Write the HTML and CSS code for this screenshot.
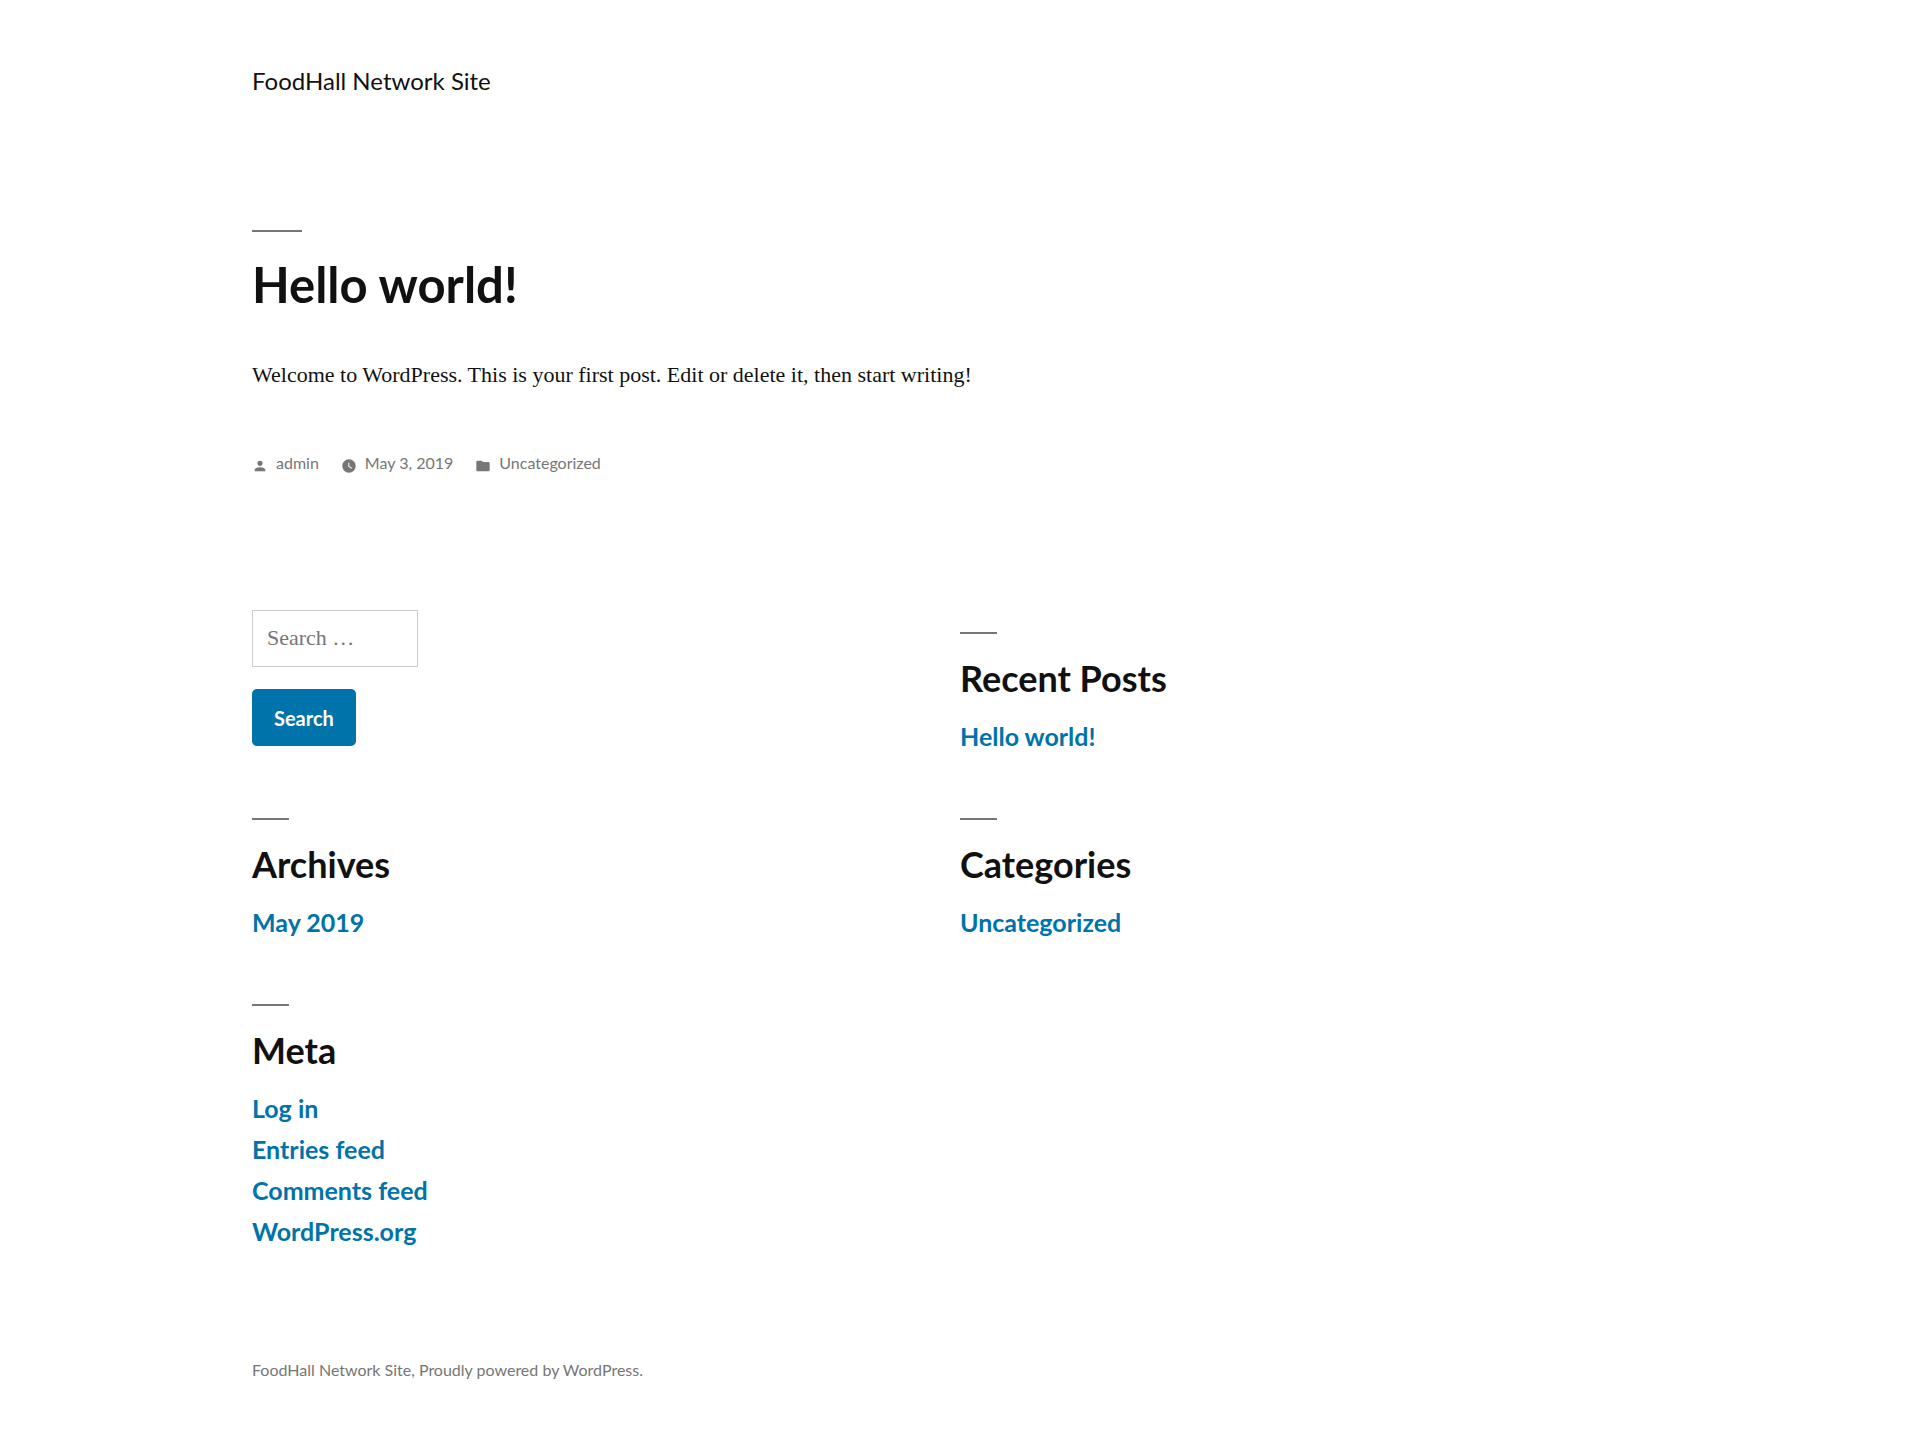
FILE: index.html
```html
<!DOCTYPE html>
<html lang="en">
<head>
    <meta charset="UTF-8">
    <meta name="viewport" content="width=device-width, initial-scale=1">
    <title>FoodHall Network Site</title>
    <link rel="stylesheet" href="styles.css">
</head>
<body>
    <header class="site-header">
        <p class="site-title"><a href="#">FoodHall Network Site</a></p>
    </header>

    <main class="site-main">
        <article class="entry">
            <h1 class="entry-title"><a href="#">Hello world!</a></h1>
            <p class="entry-content">Welcome to WordPress. This is your first post. Edit or delete it, then start writing!</p>
            <div class="entry-meta">
                <a class="meta-item" href="#">
                    <svg class="icon" viewBox="0 0 24 24" aria-hidden="true"><path d="M12 12c2.2 0 4-1.8 4-4s-1.8-4-4-4-4 1.8-4 4 1.8 4 4 4zm0 2c-2.7 0-8 1.3-8 4v2h16v-2c0-2.7-5.3-4-8-4z"/></svg>
                    <span>admin</span>
                </a>
                <a class="meta-item" href="#">
                    <svg class="icon" viewBox="0 0 24 24" aria-hidden="true"><path d="M12 2C6.5 2 2 6.5 2 12s4.5 10 10 10 10-4.5 10-10S17.5 2 12 2zm4.2 14.2L11 13V7h1.5v5.2l4.5 2.7-.8 1.3z"/></svg>
                    <time datetime="2019-05-03">May 3, 2019</time>
                </a>
                <a class="meta-item" href="#">
                    <svg class="icon" viewBox="0 0 24 24" aria-hidden="true"><path d="M10 4H4c-1.1 0-2 .9-2 2v12c0 1.1.9 2 2 2h16c1.1 0 2-.9 2-2V8c0-1.1-.9-2-2-2h-8l-2-2z"/></svg>
                    <span>Uncategorized</span>
                </a>
            </div>
        </article>
    </main>

    <footer class="site-footer">
        <div class="widget-area">
            <section class="widget">
                <form class="search-form" role="search" onsubmit="return false">
                    <input type="search" class="search-field" placeholder="Search …" aria-label="Search for:">
                    <button type="submit" class="search-submit">Search</button>
                </form>
            </section>
            <section class="widget">
                <h2 class="widget-title">Recent Posts</h2>
                <ul class="widget-list">
                    <li><a href="#">Hello world!</a></li>
                </ul>
            </section>
            <section class="widget">
                <h2 class="widget-title">Archives</h2>
                <ul class="widget-list">
                    <li><a href="#">May 2019</a></li>
                </ul>
            </section>
            <section class="widget">
                <h2 class="widget-title">Categories</h2>
                <ul class="widget-list">
                    <li><a href="#">Uncategorized</a></li>
                </ul>
            </section>
            <section class="widget">
                <h2 class="widget-title">Meta</h2>
                <ul class="widget-list">
                    <li><a href="#">Log in</a></li>
                    <li><a href="#">Entries feed</a></li>
                    <li><a href="#">Comments feed</a></li>
                    <li><a href="#">WordPress.org</a></li>
                </ul>
            </section>
        </div>

        <div class="site-info">
            <a href="#">FoodHall Network Site</a>, <a href="#">Proudly powered by WordPress.</a>
        </div>
    </footer>
</body>
</html>
```
FILE: styles.css
```css
:root {
    --text: #111;
    --muted: #767676;
    --link: #0073aa;
    --border: #ccc;
    --heading-font: Lato, "Noto Sans", sans-serif;
    --body-font: "Liberation Serif", "Times New Roman", serif;
}

* {
    box-sizing: border-box;
}

body {
    margin: 0;
    padding: 0 calc(10% + 60px);
    background: #fff;
    color: var(--text);
    font-family: var(--body-font);
    font-size: 22px;
}

a {
    color: inherit;
    text-decoration: none;
}

h1,
h2,
p,
ul {
    margin: 0;
    padding: 0;
}

/* Header */
.site-header {
    padding: 66px 0 134px;
}

.site-title {
    font-family: var(--heading-font);
    font-size: 24px;
    line-height: 30px;
}

/* Post */
.entry-title {
    font-family: var(--heading-font);
    font-size: 49px;
    font-weight: 700;
    line-height: 60px;
}

.entry-title::before,
.widget-title::before {
    content: "";
    display: block;
    width: 50px;
    height: 2px;
    margin-bottom: 22px;
    background: var(--muted);
}

.entry-content {
    margin-top: 41px;
    line-height: 40px;
}

.entry-meta {
    display: flex;
    flex-wrap: wrap;
    gap: 22px;
    margin-top: 56px;
    color: var(--muted);
    font-family: var(--heading-font);
    font-size: 16px;
    line-height: 24px;
}

.meta-item {
    display: flex;
    align-items: flex-end;
    gap: 8px;
}

.icon {
    width: 16px;
    height: 16px;
    margin-bottom: 1px;
    fill: currentColor;
}

/* Widgets */
.widget-area {
    display: grid;
    grid-template-columns: 1fr 1fr;
    row-gap: 39px;
    padding-top: 135px;
}

.search-form {
    display: flex;
    flex-direction: column;
    align-items: flex-start;
    gap: 22px;
}

.search-field {
    width: 166px;
    height: 57px;
    padding: 0 14px 2px;
    border: 1px solid var(--border);
    border-radius: 0;
    background: #fff;
    color: var(--text);
    font-family: var(--body-font);
    font-size: 22px;
    appearance: none;
}

.search-field::placeholder {
    color: var(--muted);
}

.search-submit {
    height: 57px;
    padding: 0 22px;
    border: none;
    border-radius: 5px;
    background: var(--link);
    color: #fff;
    font-family: var(--heading-font);
    font-size: 20px;
    font-weight: 700;
    cursor: pointer;
}

.widget-title {
    margin-top: 22px;
    font-family: var(--heading-font);
    font-size: 36px;
    font-weight: 700;
    line-height: 44px;
}

.widget-title::before {
    width: 37px;
}

.widget-list {
    margin-top: 16px;
    list-style: none;
    color: var(--link);
    font-family: var(--heading-font);
    font-size: 25px;
    font-weight: 700;
    line-height: 41px;
}

.widget-list a:hover {
    color: #005177;
}

.site-info {
    padding: 106px 0 69px;
    color: var(--muted);
    font-family: var(--heading-font);
    font-size: 16px;
    line-height: 24px;
}

@media (max-width: 768px) {
    body {
        padding: 0 16px;
    }

    .widget-area {
        grid-template-columns: 1fr;
    }
}
```
